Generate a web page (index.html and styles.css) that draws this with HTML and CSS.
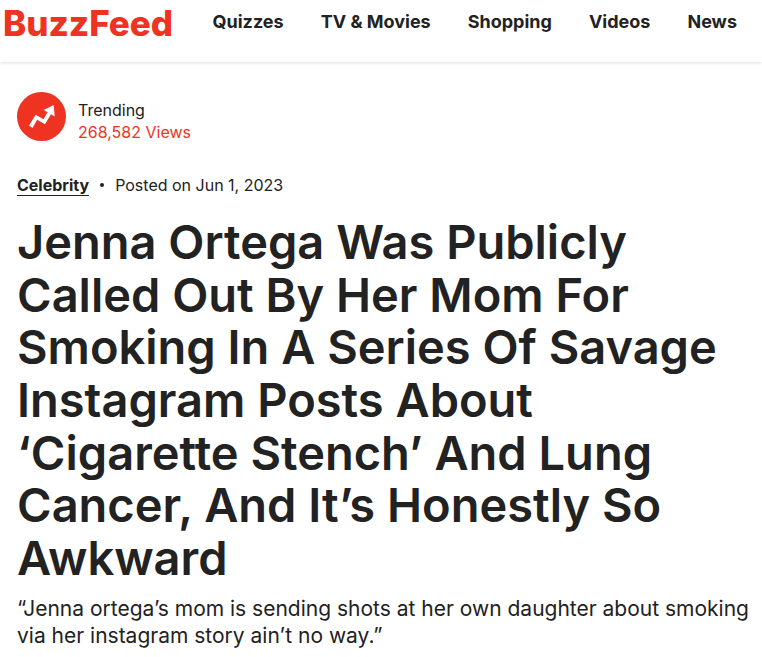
FILE: index.html
```html
<!DOCTYPE html>
<html lang="en">
<head>
<meta charset="utf-8">
<meta name="viewport" content="width=device-width, initial-scale=1">
<title>BuzzFeed</title>
<link rel="stylesheet" href="styles.css">
</head>
<body>
<header class="site-header">
  <a class="logo" href="#">BuzzFeed</a>
  <nav class="site-nav" aria-label="Main">
    <a href="#">Quizzes</a>
    <a href="#">TV &amp; Movies</a>
    <a href="#">Shopping</a>
    <a href="#">Videos</a>
    <a href="#">News</a>
  </nav>
</header>
<main class="article">
  <div class="trending">
    <svg class="trending-icon" viewBox="0 0 49 49" aria-hidden="true">
      <circle cx="24.500" cy="24.500" r="24.500" fill="#ee3322"/>
      <path d="M12 33.500 18.700 22.800 26.500 27.200 30.500 20.300 26.700 18 36.700 13 37.700 24.500 34 22.300 28 32.300 20.200 27.800 15.500 36Z" fill="#fff"/>
    </svg>
    <div class="trending-text">
      <div>Trending</div>
      <div class="views">268,582 Views</div>
    </div>
  </div>
  <div class="meta">
    <a class="category" href="#">Celebrity</a>
    <span class="dot" aria-hidden="true"></span>
    <span>Posted on Jun 1, 2023</span>
  </div>
  <h1 class="headline">Jenna Ortega Was Publicly Called Out By Her Mom For Smoking In A Series Of Savage Instagram Posts About ‘Cigarette Stench’ And Lung Cancer, And It’s Honestly So Awkward</h1>
  <p class="dek">“Jenna ortega’s mom is sending shots at her own daughter about smoking via her instagram story ain’t no way.”</p>
</main>
</body>
</html>
```
FILE: styles.css
```css
* { box-sizing: border-box; }
body {
  margin: 0;
  background: #fff;
  color: #222;
  font-family: Inter, "Liberation Sans", sans-serif;
  font-size: 16px;
  line-height: 22px;
}
a { color: inherit; text-decoration: none; }
.site-header {
  display: flex;
  justify-content: space-between;
  height: 62px;
  padding: 0 25px 0 3px;
  box-shadow: 0 1px 3px rgba(0, 0, 0, 0.12);
}
.logo {
  color: #ee3322;
  font-size: 35px;
  font-weight: 800;
  line-height: 46px;
}
.site-nav {
  display: flex;
  gap: 37px;
  font-size: 18px;
  font-weight: 700;
  line-height: 43px;
  white-space: nowrap;
}
.article { padding: 30px 10px 0 17px; }
.trending { display: flex; align-items: flex-start; gap: 12px; }
.trending-icon { width: 49px; height: 49px; }
.trending-text { padding-top: 7px; }
.views { color: #ee3322; }
.meta { display: flex; align-items: center; margin-top: 31px; }
.category { font-weight: 700; line-height: 20px; border-bottom: 1px solid #222; }
.dot { width: 4px; height: 4px; margin: 0 11px; border-radius: 50%; background: #222; }
.headline {
  margin: 20px 0 0;
  font-size: 47px;
  font-weight: 600;
  line-height: 1.12;
}
.dek { margin: 11px 0 0; font-size: 21px; line-height: 27px; }
```
